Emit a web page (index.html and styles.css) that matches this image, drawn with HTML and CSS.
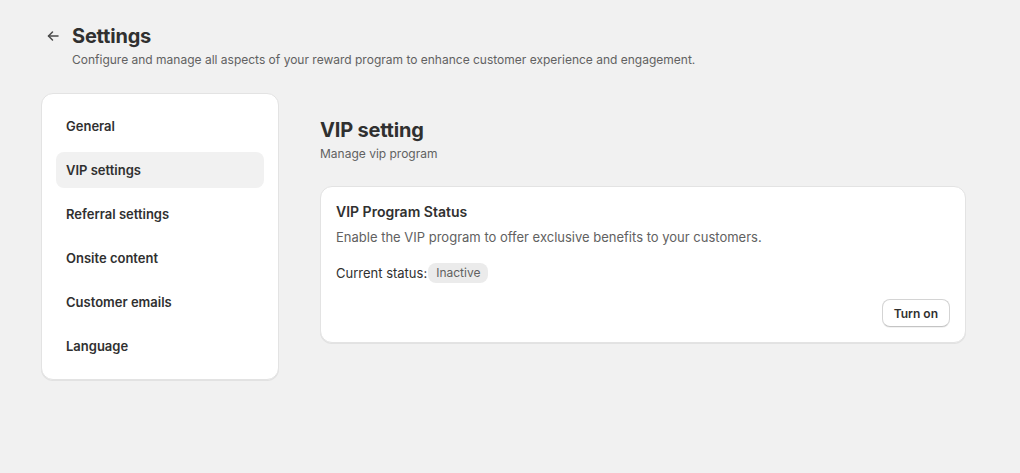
FILE: index.html
```html
<!DOCTYPE html>
<html>
<head>
<meta charset="utf-8">
<link rel="stylesheet" href="styles.css">
</head>
<body>
<div class="page">
  <header class="page-header">
    <div class="title-row">
      <button class="back" aria-label="Back">
        <svg width="16" height="16" viewBox="0 0 16 16" fill="none" stroke="#4a4a4a" stroke-width="1.5" stroke-linecap="round" stroke-linejoin="round"><path d="M13 8H3.5"/><path d="M7.5 4L3.5 8l4 4"/></svg>
      </button>
      <h1 class="title">Settings</h1>
    </div>
    <p class="subtitle">Configure and manage all aspects of your reward program to enhance customer experience and engagement.</p>
  </header>
  <div class="layout">
    <nav class="card sidebar">
      <a class="nav-item">General</a>
      <a class="nav-item active">VIP settings</a>
      <a class="nav-item">Referral settings</a>
      <a class="nav-item">Onsite content</a>
      <a class="nav-item">Customer emails</a>
      <a class="nav-item">Language</a>
    </nav>
    <main class="main">
      <h2 class="section-title">VIP setting</h2>
      <p class="section-sub">Manage vip program</p>
      <section class="card status-card">
        <h3 class="card-title">VIP Program Status</h3>
        <p class="card-desc">Enable the VIP program to offer exclusive benefits to your customers.</p>
        <div class="status-row">
          <span>Current status:</span>
          <span class="badge">Inactive</span>
        </div>
        <div class="actions">
          <button class="btn">Turn on</button>
        </div>
      </section>
    </main>
  </div>
</div>
</body>
</html>
```
FILE: styles.css
```css
* { box-sizing: border-box; }
html, body { margin: 0; padding: 0; }
body {
  background: #f1f1f1;
  font-family: Inter, "Noto Sans", sans-serif;
  color: #303030;
  font-size: 13px;
}
.page {
  padding: 24px 54px 40px 41px;
}
.page-header { padding-left: 4px; }
.title-row {
  display: flex;
  align-items: center;
  gap: 8px;
}
.back {
  border: none;
  background: transparent;
  padding: 0;
  width: 19px;
  height: 24px;
  display: flex;
  align-items: center;
  justify-content: flex-start;
}
.title {
  margin: 0;
  font-size: 20px;
  font-weight: 700;
  line-height: 24px;
  color: #303030;
  letter-spacing: -0.2px;
}
.subtitle {
  margin: 4px 0 0 27px;
  font-size: 12px;
  line-height: 16px;
  color: #616161;
}
.layout {
  display: grid;
  grid-template-columns: 238px 1fr;
  gap: 41px;
  margin-top: 25px;
  align-items: start;
}
.card {
  background: #fff;
  border-radius: 12px;
  border: 1px solid #e3e3e3;
  box-shadow: 0 1px 0 0 rgba(26,26,26,0.07);
}
.sidebar {
  padding: 14px 14px 15px;
  display: flex;
  flex-direction: column;
  gap: 8px;
}
.nav-item {
  display: flex;
  align-items: center;
  height: 36px;
  padding: 0 10px;
  border-radius: 8px;
  font-size: 13px;
  font-weight: 600;
  color: #303030;
}
.nav-item.active { background: #f1f1f1; }
.main { padding-top: 25px; }
.section-title {
  margin: 0;
  font-size: 20px;
  font-weight: 700;
  line-height: 24px;
  letter-spacing: -0.2px;
}
.section-sub {
  margin: 4px 0 0;
  font-size: 12px;
  line-height: 16px;
  color: #616161;
}
.status-card {
  margin-top: 24px;
  padding: 15px;
}
.card-title {
  margin: 0;
  font-size: 14px;
  font-weight: 600;
  line-height: 20px;
}
.card-desc {
  margin: 5px 0 0;
  font-size: 13px;
  line-height: 20px;
  color: #616161;
}
.status-row {
  margin-top: 16px;
  display: flex;
  align-items: center;
  gap: 1px;
  font-size: 13px;
  line-height: 20px;
}
.badge {
  background: #ebebeb;
  color: #616161;
  border-radius: 8px;
  padding: 0 8px;
  font-size: 12px;
  line-height: 20px;
}
.actions {
  margin-top: 16px;
  display: flex;
  justify-content: flex-end;
}
.btn {
  font-family: inherit;
  font-size: 12px;
  font-weight: 600;
  color: #303030;
  background: #fff;
  border: 1px solid #d4d4d4;
  border-bottom-color: #c4c4c4;
  border-radius: 8px;
  height: 28px;
  padding: 0 11px;
  box-shadow: 0 1px 0 rgba(0,0,0,0.05);
}
```
